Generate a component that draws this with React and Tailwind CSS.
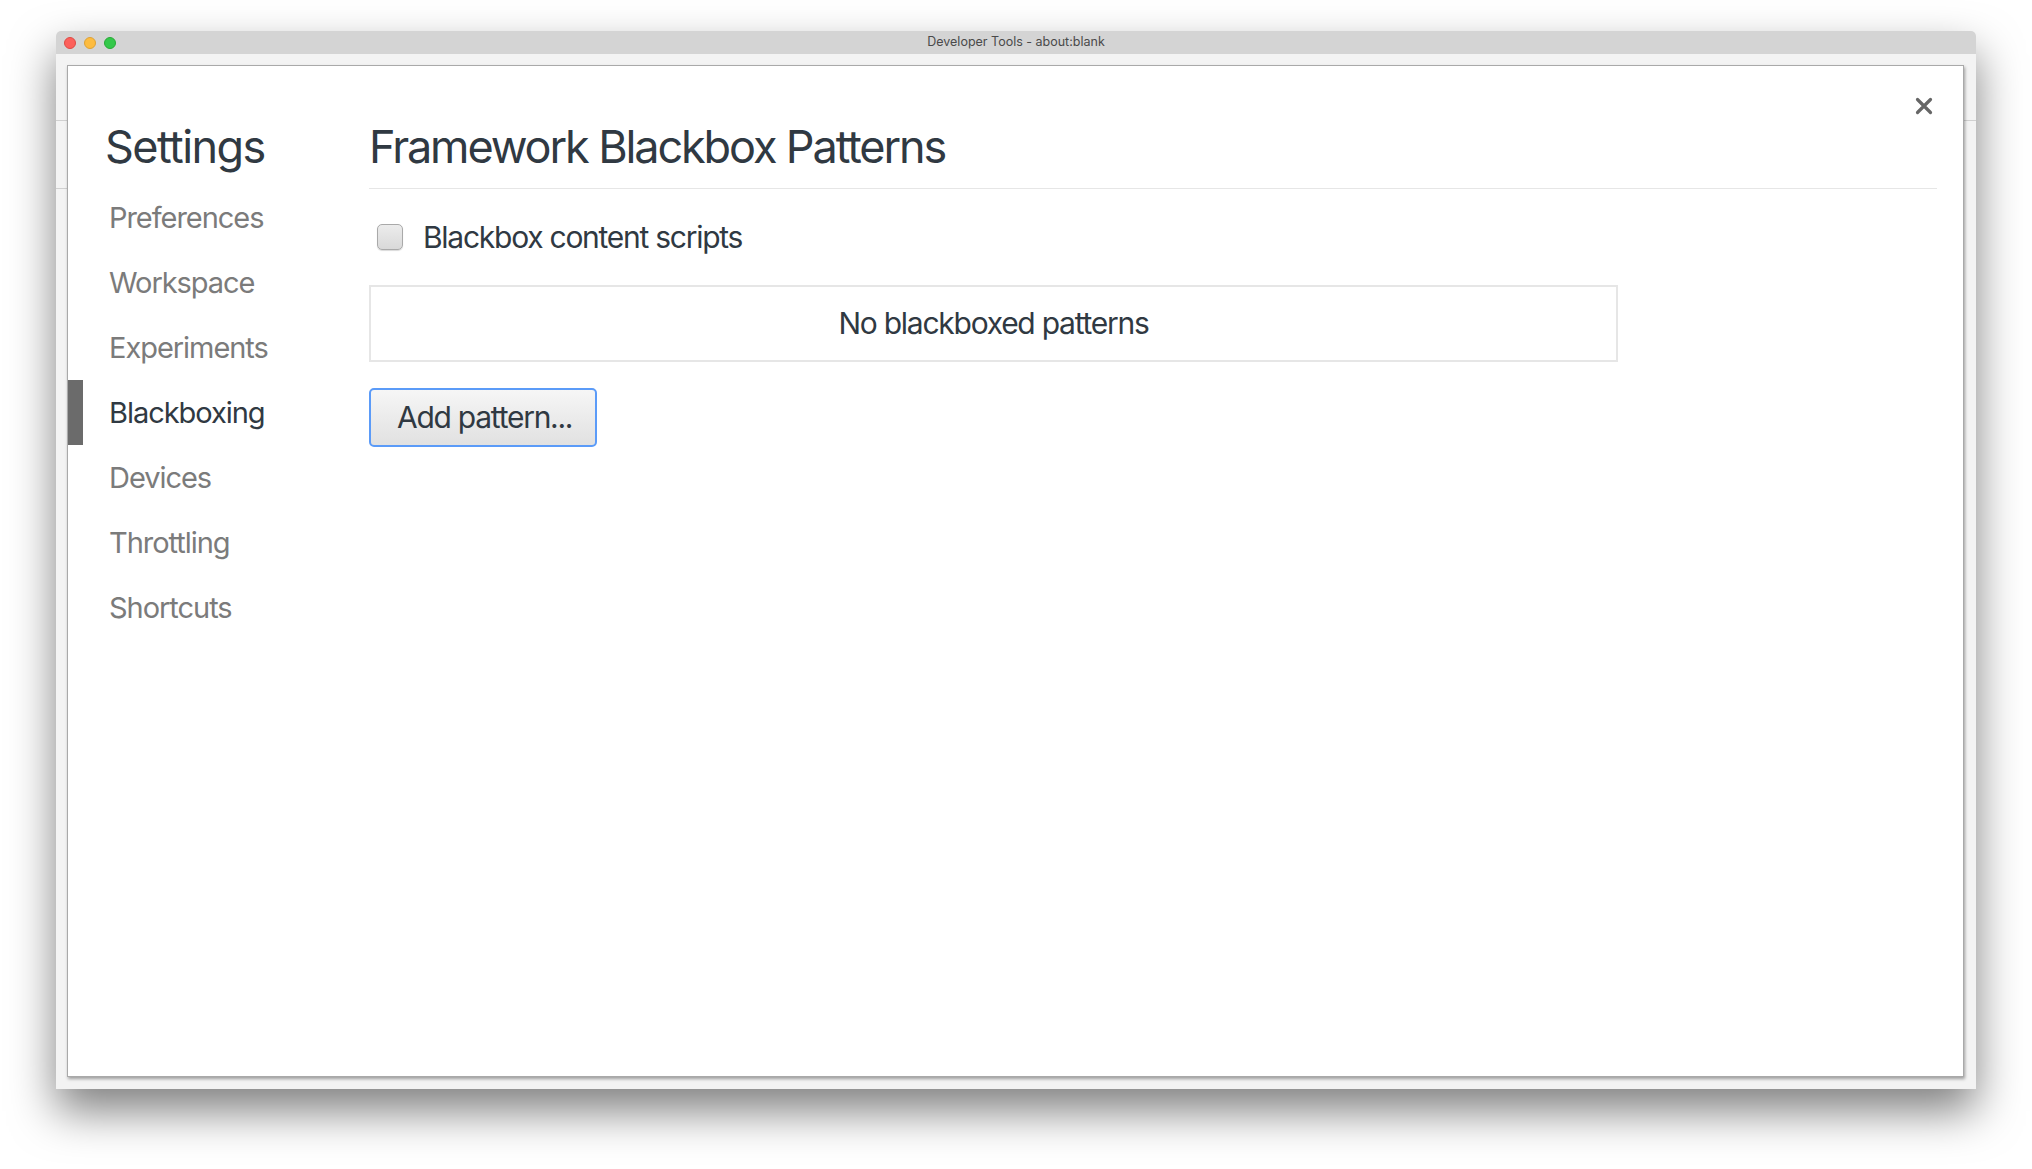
import { useState } from "react";

const navItems = [
  "Preferences",
  "Workspace",
  "Experiments",
  "Blackboxing",
  "Devices",
  "Throttling",
  "Shortcuts",
];

function TrafficLights() {
  return (
    <div className="flex items-center gap-[8px] pl-[8px]">
      <div className="w-[12px] h-[12px] rounded-full bg-[#fc605b] border border-[#de4a44]" />
      <div className="w-[12px] h-[12px] rounded-full bg-[#fdbc40] border border-[#dea235]" />
      <div className="w-[12px] h-[12px] rounded-full bg-[#34c84a] border border-[#27aa35]" />
    </div>
  );
}

export default function App() {
  const [active, setActive] = useState("Blackboxing");
  const [checked, setChecked] = useState(false);

  return (
    <div
      className="w-[2032px] h-[1169px] bg-white pt-[31px] pl-[56px] overflow-hidden"
      style={{ fontFamily: "Inter, 'Noto Sans', sans-serif" }}
    >
      <div className="w-[1920px] h-[1058px] flex flex-col rounded-t-[5px] shadow-[0_22px_45px_rgba(0,0,0,0.5)]">
        {/* title bar */}
        <div className="h-[23px] bg-[#d4d4d4] rounded-t-[5px] flex items-center relative">
          <TrafficLights />
          <div className="absolute inset-0 flex items-center justify-center text-[12.5px] text-[#4a4a4a]">
            Developer Tools - about:blank
          </div>
        </div>

        {/* devtools body behind the dialog */}
        <div className="flex-1 bg-[#f3f3f3] relative pt-[11px] pl-[11px] pr-[12px] pb-[12px] flex">
          <div className="absolute left-0 right-0 top-[66px] h-px bg-[#d0d0d0]" />
          <div className="absolute left-0 w-[12px] top-[134px] h-px bg-[#d0d0d0]" />

          {/* settings dialog */}
          <div className="relative flex-1 bg-white border border-[#a9a9a9] shadow-[1px_2px_3px_rgba(0,0,0,0.35)] flex">
            <button className="absolute top-[31px] right-[30px] w-[18px] h-[18px] flex items-center justify-center">
              <svg width="18" height="18" viewBox="0 0 18 18">
                <path d="M2.5 2.5 L15.5 15.5 M15.5 2.5 L2.5 15.5" stroke="#666666" strokeWidth="3.2" strokeLinecap="round" />
              </svg>
            </button>

            {/* sidebar */}
            <div className="w-[301px] pt-[54px] flex flex-col">
              <div className="pl-[37px] text-[45px] leading-[54px] text-[#303942] tracking-[-0.035em]">
                Settings
              </div>
              <div className="mt-[11px] flex flex-col">
                {navItems.map((item) => {
                  const isActive = item === active;
                  return (
                    <div
                      key={item}
                      onClick={() => setActive(item)}
                      className="h-[65px] flex items-center cursor-pointer"
                    >
                      <div className={`w-[15px] h-full ${isActive ? "bg-[#6b6b6b]" : ""}`} />
                      <div
                        className={`ml-[26px] text-[29px] tracking-[-0.036em] ${isActive ? "text-[#303942]" : "text-[#7b7b7b]"}`}
                      >
                        {item}
                      </div>
                    </div>
                  );
                })}
              </div>
            </div>

            {/* content */}
            <div className="flex-1 pt-[54px] pr-[26px] flex flex-col">
              <div className="text-[45px] leading-[54px] text-[#303942] pb-[14px] border-b border-[#e6e6e6] tracking-[-0.047em]">
                Framework Blackbox Patterns
              </div>

              <label className="mt-[30px] h-[36px] flex items-center cursor-pointer">
                <span
                  onClick={() => setChecked(!checked)}
                  className="ml-[8px] w-[26px] h-[26px] rounded-[5px] border border-[#a9a9a9] bg-gradient-to-b from-[#ececec] to-[#d9d9d9] shadow-[0_1px_1px_rgba(0,0,0,0.15)] flex items-center justify-center"
                >
                  {checked && (
                    <svg width="18" height="18" viewBox="0 0 18 18">
                      <path d="M3 9 L7 13 L15 4" stroke="#303942" strokeWidth="2.5" fill="none" />
                    </svg>
                  )}
                </span>
                <span className="ml-[20px] text-[30px] text-[#303942] tracking-[-0.042em]">
                  Blackbox content scripts
                </span>
              </label>

              <div className="mt-[30px] w-[1249px] h-[77px] border-2 border-[#e6e6e6] flex items-center justify-center text-[30px] text-[#303942] tracking-[-0.042em]">
                No blackboxed patterns
              </div>

              <div className="mt-[26px]">
                <button className="w-[228px] h-[59px] rounded-[5px] border-2 border-[#5b9bf8] bg-gradient-to-b from-[#f6f6f6] to-[#e1e1e1] text-[30px] text-[#303942] tracking-[-0.042em] flex items-center pl-[26px]">
                  Add pattern...
                </button>
              </div>
            </div>
          </div>
        </div>
      </div>
    </div>
  );
}
